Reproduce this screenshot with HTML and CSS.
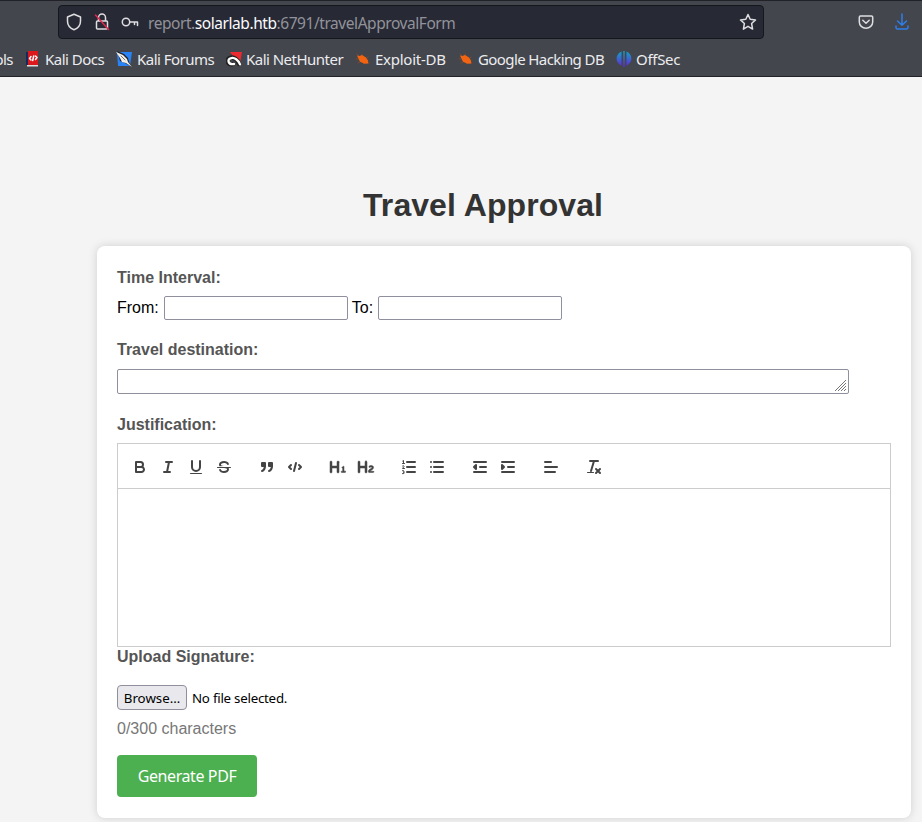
FILE: index.html
```html
<!DOCTYPE html>
<html lang="en">
<head>
<meta charset="utf-8">
<title>Travel Approval</title>
<link rel="stylesheet" href="styles.css">
</head>
<body>
<header class="browser">
  <div class="nav">
    <div class="url">
      <svg class="shield" width="16" height="18" viewBox="0 0 16 18"><path d="M8 1.200 14.500 4v4.200c0 3.800-2.700 7-6.500 8.600C4.200 15.200 1.500 12 1.500 8.200V4Z"/></svg>
      <svg class="lock" width="16" height="18" viewBox="0 0 16 18"><path d="M4.500 7.500V4.500a3.500 3.500 0 0 1 7 0v3M3.500 8h9a1 1 0 0 1 1 1v6a1 1 0 0 1-1 1h-9a1 1 0 0 1-1-1V9a1 1 0 0 1 1-1Z"/><path class="slash" d="M1.500 2 14.500 16.500"/></svg>
      <svg class="key" width="18" height="12" viewBox="0 0 18 12"><circle cx="5" cy="6" r="3.700"/><path d="M8.700 6H16.500V9.500M13.500 6v2.500"/></svg>
      <span class="address">report.<b>solarlab.htb</b>:6791/travelApprovalForm</span>
      <svg class="star" width="18" height="18" viewBox="0 0 18 18"><path d="m9 1.500 2.200 4.800 5.300.6-3.900 3.600 1 5.600L9 13.300l-4.600 2.800 1-5.600L1.500 6.900l5.300-.6Z"/></svg>
    </div>
    <svg class="pocket" width="16" height="16" viewBox="0 0 16 16"><path d="M2.500 2h11a1.200 1.200 0 0 1 1.200 1.200V8a6.700 6.200 0 0 1-13.400 0V3.200A1.200 1.200 0 0 1 2.500 2Z"/><path d="m4.800 6.200 3.200 3 3.200-3"/></svg>
    <svg class="download" width="16" height="18" viewBox="0 0 16 18"><path d="M8 1v11M3.500 8 8 12.300 12.500 8M2 13v1.500A1.500 1.500 0 0 0 3.500 16h9a1.500 1.500 0 0 0 1.500-1.500V13"/></svg>
  </div>
  <nav class="bookmarks">
    <span class="bm tools">ols</span>
    <span class="bm docs"><svg width="16" height="18" viewBox="0 0 16 18"><path fill="#14295c" d="M1 2h3v13H1z"/><path fill="#dc181c" d="M3 1h10v14H3z"/><path fill="#ddd" d="M2 15h11v1.500H2z"/><path d="m6 6.500-1.500 2L6 10M10.500 6l1.500 1.500-1.500 2M8.700 6 7.700 10.500" fill="none" stroke="#fff"/></svg>Kali Docs</span>
    <span class="bm forums"><svg width="16" height="18" viewBox="0 0 16 18"><path fill="#2a83f4" d="M1 2h15l-2 14H2z"/><path fill="#222" d="M1 1 8 4l4 4 1 4 3 5-7-4-5-2-1-4Z"/><path fill="#f2eee8" d="m0 2 7 3 4 4 1 3 4 5-6-4-4-1-2-4Z"/><path stroke="#555" stroke-width=".8" d="m5 6 4 4" fill="none"/></svg>Kali Forums</span>
    <span class="bm hunter"><svg width="16" height="18" viewBox="0 0 16 18"><path fill="#ed2930" d="M4 2h12l-2 11-5-4z"/><path d="M7 14C1 15 0 9 4 8c4-1.500 8 2 9 6" fill="none" stroke="#222" stroke-width="4.500"/><path d="M8 14C2 15 1 9.500 4.500 8.300c4-1.500 8 2 9.500 6" fill="none" stroke="#fff" stroke-width="2.300"/></svg>Kali NetHunter</span>
    <span class="bm exploit"><svg width="16" height="18" viewBox="0 0 16 18"><path d="M4 6 2 4M7 5V4M3 9H1M5 12l-2 1M9 13l-1 1M12 8l1-1M13 13h1" stroke="#8b4a2a" stroke-width=".8"/><path fill="#f26411" d="m2 5.500 2.500.5L7 5l4 2.500 2 3 .3 3-3.800.2-4.500-2-1.500-3Z"/></svg>Exploit-DB</span>
    <span class="bm google"><svg width="16" height="18" viewBox="0 0 16 18"><path d="M4 6 2 4M7 5V4M3 9H1M5 12l-2 1M9 13l-1 1M12 8l1-1M13 13h1" stroke="#8b4a2a" stroke-width=".8"/><path fill="#f26411" d="m2 5.500 2.500.5L7 5l4 2.500 2 3 .3 3-3.800.2-4.500-2-1.500-3Z"/></svg>Google Hacking DB</span>
    <span class="bm offsec"><svg width="16" height="18" viewBox="0 0 16 18"><defs><linearGradient id="og" gradientUnits="userSpaceOnUse" x1="0" y1="1" x2="0" y2="17"><stop stop-color="#10a5c5"/><stop offset="1" stop-color="#6425dc"/></linearGradient></defs><path fill="url(#og)" d="M5.500 1.500v14C-1 13-1 4 5.500 1.500ZM7.300 1h1.400v16H7.300ZM10.500 1.500v14c6.500-2.500 6.500-11.500 0-14Z"/></svg>OffSec</span>
  </nav>
</header>
<main>
  <h1>Travel Approval</h1>
  <form class="card">
    <label class="title">Time Interval:</label>
    <div class="dates"><span>From:</span><input type="text"><span>To:</span><input type="text"></div>
    <label class="title destination">Travel destination:</label>
    <div class="area"><svg width="11" height="11" viewBox="0 0 11 11"><path d="M0 11 11 0M3 11l8-8M6 11l5-5M9 11l2-2"/></svg></div>
    <label class="title justification">Justification:</label>
    <div class="toolbar">
      <span class="group">
        <svg viewBox="0 0 18 18"><path d="M5,4H9.500A2.500,2.500,0,0,1,12,6.500v0A2.500,2.500,0,0,1,9.500,9H5A0,0,0,0,1,5,9V4A0,0,0,0,1,5,4Z"/><path d="M5,9h5.500A2.500,2.500,0,0,1,13,11.500v0A2.500,2.500,0,0,1,10.500,14H5a0,0,0,0,1,0,0V9A0,0,0,0,1,5,9Z"/></svg>
        <svg viewBox="0 0 18 18"><path d="M7 4h6M5 14h6M8 14l2-10"/></svg>
        <svg viewBox="0 0 18 18"><path d="M5,3V9a4.012,4.012,0,0,0,4,4H9a4.012,4.012,0,0,0,4-4V3"/><rect class="solid" height="1" rx=".5" width="12" x="3" y="15"/></svg>
        <svg viewBox="0 0 18 18"><path class="thin" d="M15.500 9.500h-13"/><path class="solid" d="M9.007,8C6.542,7.791,6,7.519,6,6.500,6,5.792,7.283,5,9,5c1.571,0,2.765.679,2.969,1.309a1,1,0,0,0,1.900-.617C13.356,4.106,11.354,3,9,3,6.200,3,4,4.538,4,6.500a3.200,3.200,0,0,0,.5,1.843Z"/><path class="solid" d="M8.984,10C11.457,10.208,12,10.479,12,11.500c0,.708-1.283,1.500-3,1.500-1.571,0-2.765-.679-2.969-1.309a1,1,0,1,0-1.900.617C4.644,13.894,6.646,15,9,15c2.800,0,5-1.538,5-3.500a3.200,3.200,0,0,0-.5-1.843Z"/></svg>
      </span>
      <span class="group">
        <svg viewBox="0 0 18 18"><g class="filled"><rect height="3" width="3" x="4" y="5"/><rect height="3" width="3" x="11" y="5"/><path d="M7,8c0,4.031-3,5-3,5M14,8c0,4.031-3,5-3,5"/></g></svg>
        <svg viewBox="0 0 18 18"><path d="m5 7-2 2 2 2M13 7l2 2-2 2M10 5 8 13"/></svg>
      </span>
      <span class="group">
        <svg class="heading" viewBox="0 0 18 18"><path class="solid" d="M10,4V14a1,1,0,0,1-2,0V10H3v4a1,1,0,0,1-2,0V4A1,1,0,0,1,3,4V8H8V4a1,1,0,0,1,2,0Zm6.068,9.209H14.981V8.437a.3.3,0,0,0-.530-.117,2.200,2.200,0,0,1-1.129.628.567.567,0,0,0-.455.674c.062.363.257.493.636.442l.200-.039v3.184H12.700a.567.567,0,0,0-.600.600.569.569,0,0,0,.600.606h3.365a.571.571,0,0,0,.600-.606A.569.569,0,0,0,16.068,13.209Z"/></svg>
        <svg class="heading" viewBox="0 0 18 18"><path class="solid" d="M16.740,13.810a.605.605,0,0,1-.600.600H12.092a.644.644,0,0,1-.720-.648c-.192-2.844,3.539-2.868,3.539-4.224,0-.420-.324-.660-.792-.660-.828,0-.936.720-1.476.720-.408,0-.756-.336-.756-.792,0-.792,1.044-1.368,2.280-1.368,1.356,0,2.400.744,2.400,2.004,0,2.028-2.855,2.496-3.300,3.768h2.873A.605.605,0,0,1,16.740,13.810ZM9,3A1,1,0,0,0,8,4V8H3V4A1,1,0,0,0,1,4V14a1,1,0,0,0,2,0V10H8v4a1,1,0,0,0,2,0V4A1,1,0,0,0,9,3Z"/></svg>
      </span>
      <span class="group">
        <svg viewBox="0 0 18 18"><path d="M7 4h8M7 9h8M7 14h8"/><path class="thin" d="M2.500 5.500h2M3.500 5.500V2.500L2.700 3M2.500 8c.6-.7 1.700-.3 1.500.4L2.500 10.500h2M2.500 12.700h1.200a.8.800 0 0 1 0 1.400H3h.8a.9.900 0 0 1 0 1.500H2.500"/></svg>
        <svg viewBox="0 0 18 18"><path d="M6 4h9M6 9h9M6 14h9M3 4h0M3 9h0M3 14h0"/></svg>
      </span>
      <span class="group">
        <svg viewBox="0 0 18 18"><path d="M3 14h12M3 4h12M9 9h6"/><path class="filled" d="M5 7v4L3 9Z"/></svg>
        <svg viewBox="0 0 18 18"><path d="M3 14h12M3 4h12M9 9h6"/><path class="filled" d="M3 7v4l2-2Z"/></svg>
      </span>
      <span class="group"><svg viewBox="0 0 18 18"><path d="M3 9h12M3 14h10M3 4h6"/></svg></span>
      <span class="group"><svg viewBox="0 0 18 18"><path d="M5 3h8M6 13 9 3M11 11l4 4M15 11l-4 4"/><rect class="solid" x="2" y="14" width="7" height="1" rx=".5"/></svg></span>
    </div>
    <div class="editor"></div>
    <label class="title signature">Upload Signature:</label>
    <div class="file"><span class="browse">Browse…</span><span class="nofile">No file selected.</span></div>
    <div class="count">0/300 characters</div>
    <button type="button" class="generate">Generate PDF</button>
  </form>
</main>
</body>
</html>
```

FILE: styles.css
```css
* { box-sizing: border-box; }
body { margin: 0; height: 822px; overflow: hidden; background: #f4f4f4; font: 16px/18px "Liberation Sans", Arial, sans-serif; color: #000; }
.browser { height: 77px; background: #43464d; border-top: 1px solid #202228; border-bottom: 1px solid #222329; font-family: "Noto Sans", sans-serif; }
.browser svg { flex: none; fill: none; stroke: #dedee1; stroke-width: 1.500; stroke-linejoin: round; stroke-linecap: round; }
.nav { display: flex; align-items: center; height: 42px; padding-left: 58px; }
.url { display: flex; align-items: center; width: 706px; height: 34px; padding: 0 6px 0 7px; background: #272935; border: 1px solid #15171d; border-radius: 4px; }
.lock { margin-left: 12px; }
.browser .slash { stroke: #e22850; }
.key { margin-left: 11px; }
.address { margin-left: 9px; padding-top: 1px; color: #92939a; font-size: 15.500px; letter-spacing: -.44px; white-space: nowrap; }
.address b { color: #fbfbfe; font-weight: 400; }
.star { margin-left: auto; }
.pocket { margin-left: 94px; }
.browser .download { margin-left: 20px; stroke: #2f7de9; }
.bookmarks { display: flex; height: 32px; align-items: center; color: #ececef; font-size: 15px; letter-spacing: -.52px; white-space: nowrap; }
.bm { display: flex; align-items: center; flex: none; }
.bm svg { margin-right: 4px; stroke: none; }
.tools { width: 25px; padding-right: 12px; justify-content: flex-end; }
.docs { width: 91px; }
.forums { width: 110px; }
.forums svg { margin-right: 5px; }
.hunter { width: 129px; }
.exploit { width: 103px; letter-spacing: -.25px; }
.google { width: 158px; letter-spacing: -.6px; }
.offsec { letter-spacing: -.3px; }
main { padding: 109px 11px 0 97px; }
h1 { margin: 0 0 22px; padding-right: 42px; font-size: 32px; line-height: 38px; letter-spacing: .07px; text-align: center; color: #333; }
.card { height: 572px; padding: 22px 20px; background: #fff; border-radius: 8px; box-shadow: 0 0 10px rgba(0,0,0,.15); }
.title { display: block; color: #555; font-weight: 700; line-height: 20px; }
.dates { display: flex; align-items: center; height: 24px; margin-top: 8px; gap: 4px; }
.dates span { margin-right: 1px; }
.dates input { width: 184px; height: 24px; margin: 0; border: 1px solid #8f8f9d; border-radius: 2px; }
.destination { margin-top: 20px; }
.area { display: flex; justify-content: flex-end; align-items: flex-end; width: 732px; height: 25px; margin-top: 9px; padding: 2px; border: 1px solid #8f8f9d; border-radius: 2px; }
.area path { stroke: #777; fill: none; }
.justification { margin-top: 21px; }
.toolbar { display: flex; align-items: center; height: 46px; margin-top: 8px; padding: 2px 8px 0; border: 1px solid #ccc; }
.group { display: flex; margin-right: 15px; }
.group svg { width: 28px; height: 18px; fill: none; stroke: #444; stroke-width: 2; stroke-linecap: round; stroke-linejoin: round; }
.group .solid { fill: #444; stroke: none; }
.group .thin { stroke-width: 1; }
.group .filled { fill: #444; }
.group .heading .solid { stroke: #444; stroke-width: .5; }
.editor { height: 158px; border: 1px solid #ccc; border-top: 0; }
.file { display: flex; align-items: center; height: 25px; margin-top: 18px; font: 13.300px/18px "Noto Sans", sans-serif; }
.browse { display: flex; justify-content: center; width: 70px; height: 25px; padding-top: 3px; background: #e9e9ed; border: 1px solid #8f8f9d; border-radius: 4px; }
.nofile { margin: 1px 0 0 5px; letter-spacing: -.24px; white-space: nowrap; }
.count { margin-top: 10px; color: #777; }
.generate { display: block; width: 140px; height: 42px; margin-top: 17px; padding: 0; border: 0; border-radius: 4px; background: #4caf50; color: #fff; font: 16px "Noto Sans", sans-serif; letter-spacing: -.4px; }
```
